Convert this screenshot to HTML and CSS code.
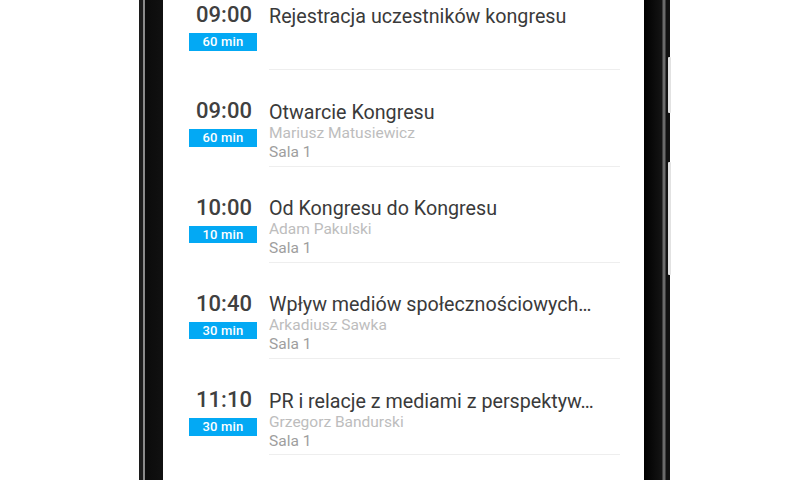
FILE: index.html
```html
<!DOCTYPE html>
<html lang="pl">
<head>
  <meta charset="UTF-8">
  <meta name="viewport" content="width=device-width, initial-scale=1.0">
  <title>Program kongresu</title>
  <link rel="stylesheet" href="styles.css">
</head>
<body>
  <div class="phone">
    <span class="side-btn side-btn-top"></span>
    <span class="side-btn side-btn-long"></span>

    <div class="screen">
      <ul class="agenda">
        <li class="slot">
          <div class="slot-time">
            <div class="hour">09:00</div>
            <div class="duration">60 min</div>
          </div>
          <div class="slot-info">
            <div class="talk">Rejestracja uczestników kongresu</div>
          </div>
        </li>

        <li class="slot">
          <div class="slot-time">
            <div class="hour">09:00</div>
            <div class="duration">60 min</div>
          </div>
          <div class="slot-info">
            <div class="talk">Otwarcie Kongresu</div>
            <div class="speaker">Mariusz Matusiewicz</div>
            <div class="room">Sala 1</div>
          </div>
        </li>

        <li class="slot">
          <div class="slot-time">
            <div class="hour">10:00</div>
            <div class="duration">10 min</div>
          </div>
          <div class="slot-info">
            <div class="talk">Od Kongresu do Kongresu</div>
            <div class="speaker">Adam Pakulski</div>
            <div class="room">Sala 1</div>
          </div>
        </li>

        <li class="slot">
          <div class="slot-time">
            <div class="hour">10:40</div>
            <div class="duration">30 min</div>
          </div>
          <div class="slot-info">
            <div class="talk">Wpływ mediów społecznościowych…</div>
            <div class="speaker">Arkadiusz Sawka</div>
            <div class="room">Sala 1</div>
          </div>
        </li>

        <li class="slot">
          <div class="slot-time">
            <div class="hour">11:10</div>
            <div class="duration">30 min</div>
          </div>
          <div class="slot-info">
            <div class="talk">PR i relacje z mediami z perspektyw…</div>
            <div class="speaker">Grzegorz Bandurski</div>
            <div class="room">Sala 1</div>
          </div>
        </li>
      </ul>
    </div>
  </div>
</body>
</html>
```

FILE: styles.css
```css
body {
  margin: 0;
  background-color: #ffffff;
  font-family: Roboto, "Noto Sans", Arial, sans-serif;
}

.phone {
  position: relative;
  width: 531px;
  height: 480px;
  margin-left: 139px;
  padding: 0 26px 0 24px;
  box-sizing: border-box;
  background: linear-gradient(to right,
    #1c1c1c 0, #1c1c1c 4px,
    #8a8a8a 4px, #8a8a8a 6px,
    #0b0b0b 6px, #111111 24px,
    #000000 calc(100% - 26px), #141414 calc(100% - 8px),
    #6a6a6a calc(100% - 7px), #6a6a6a calc(100% - 5px),
    #111111 calc(100% - 4px), #111111 100%);
}

/* volume / power keys sit on top of the frame edge */
.side-btn {
  position: absolute;
  right: -1px;
  width: 3px;
  border-radius: 1px;
  background-color: #e2e2e2;
}

.side-btn-top {
  top: 57px;
  height: 56px;
}

.side-btn-long {
  top: 162px;
  height: 113px;
}

.screen {
  height: 480px;
  overflow: hidden;
  background-color: #ffffff;
  padding-left: 26px;
}

.agenda {
  list-style: none;
  margin: -26px 0 0 0;
  padding: 0;
}

.slot {
  display: flex;
  gap: 12px;
  height: 96.25px;
}

.slot-time {
  width: 68px;
  padding-top: 28px;
  text-align: center;
}

.hour {
  font-size: 22px;
  line-height: 26px;
  font-weight: 500;
  color: #404040;
  padding-left: 2px;
}

.duration {
  margin-top: 5px;
  height: 17.5px;
  line-height: 17.5px;
  background-color: #03a9f4;
  color: #ffffff;
  font-size: 13px;
  font-weight: 500;
  letter-spacing: 0.2px;
}

.slot-info {
  flex: 1;
  min-width: 0;
  margin-right: 24px;
  padding-top: 30.5px;
  border-bottom: 1px solid #eeeeee;
  box-sizing: border-box;
}

.talk {
  font-size: 19.7px;
  line-height: 23px;
  color: #3a3a3a;
  white-space: nowrap;
  overflow: hidden;
  text-overflow: ellipsis;
}

.speaker,
.room {
  font-size: 15.5px;
  line-height: 19px;
}

.speaker {
  color: #bdbdbd;
}

.room {
  color: #9e9e9e;
}
```
